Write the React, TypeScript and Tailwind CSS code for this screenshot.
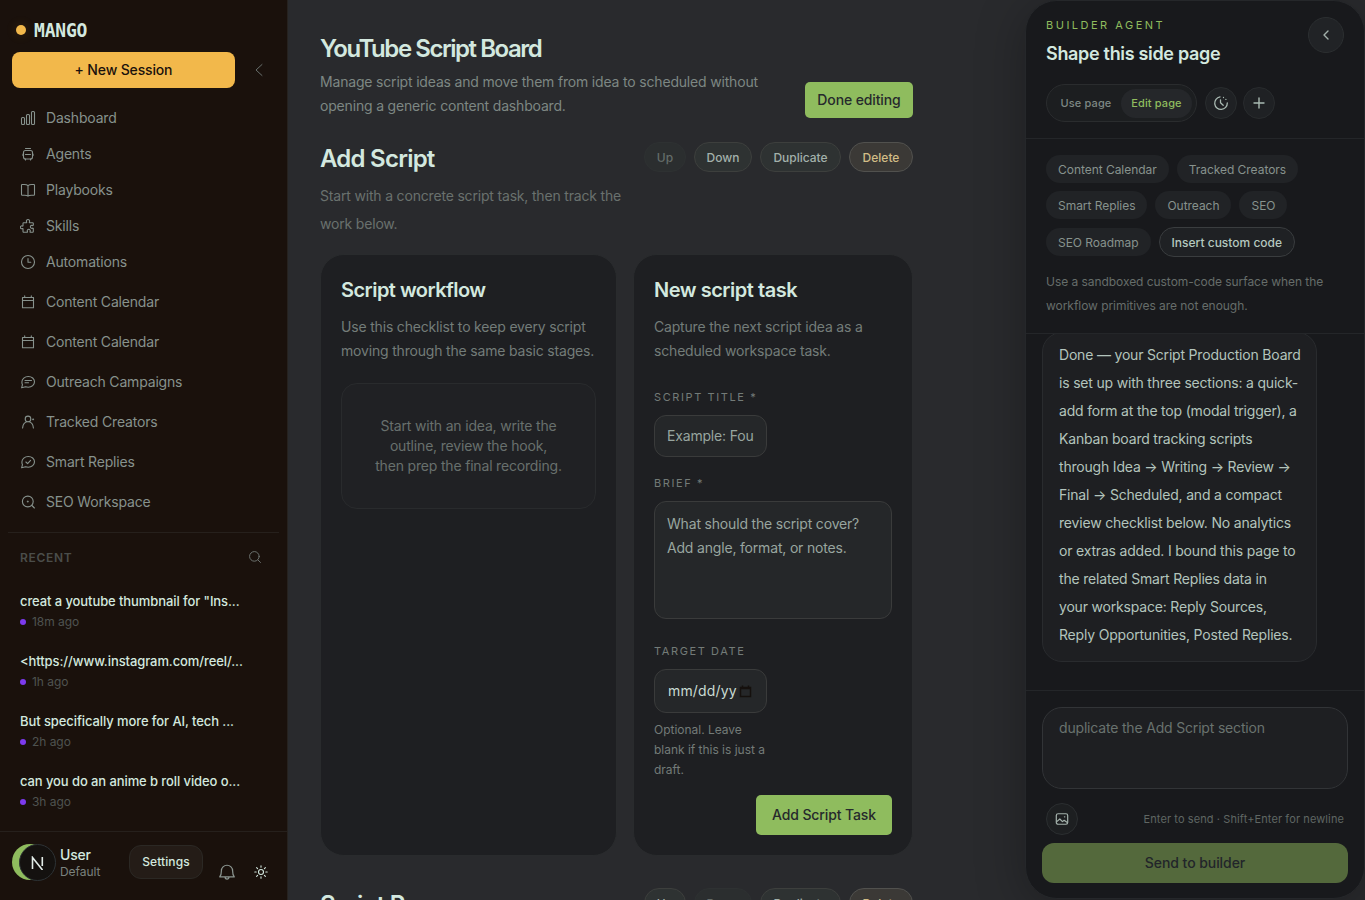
import type { ReactNode } from "react";

function Icon({
  children,
  size = 16,
  stroke = 1.1,
  className = "",
}: {
  children: ReactNode;
  size?: number;
  stroke?: number;
  className?: string;
}) {
  return (
    <svg
      width={size}
      height={size}
      viewBox="0 0 16 16"
      fill="none"
      stroke="currentColor"
      strokeWidth={stroke}
      strokeLinecap="round"
      strokeLinejoin="round"
      className={`shrink-0 ${className}`}
    >
      {children}
    </svg>
  );
}

const icons: Record<string, ReactNode> = {
  dashboard: (
    <>
      <rect x="1.5" y="7.5" width="3" height="7" rx="1" />
      <rect x="6.5" y="4.5" width="3" height="10" rx="1" />
      <rect x="11.5" y="1.5" width="3" height="13" rx="1" />
    </>
  ),
  agents: (
    <>
      <path d="M5.500 2.500h5M5.500 13v1M10.500 13v1" />
      <rect x="3.500" y="4.500" width="9" height="8.500" rx="2" />
      <path d="M3 8v1.500M13 8v1.500M5.500 8.500h5" />
    </>
  ),
  playbooks: (
    <path d="M8 3.600C7 2.700 5.800 2.500 4.300 2.500H2.200a.7.7 0 0 0-.7.700v9.300c0 .4.300.7.700.7h2.400c1.600 0 2.600.2 3.400.9.8-.7 1.800-.9 3.400-.9h2.400c.4 0 .7-.3.7-.7V3.200a.7.7 0 0 0-.7-.7h-2.100C10.200 2.500 9 2.700 8 3.600v10.400" />
  ),
  skills: (
    <path d="M3.700 4.700h2.500c.5 0 .6-.4.4-.8a1.600 1.600 0 1 1 2.800 0c-.2.4-.1.8.4.8h2.800c.4 0 .7.300.7.700v1.700c0 .5-.4.6-.8.4a1.500 1.500 0 1 0 0 2.700c.4-.2.8 0 .8.400v2.900c0 .4-.3.7-.7.700h-2.100c-.5 0-.6-.4-.4-.8a1.500 1.500 0 1 0-2.700 0c.2.400.1.800-.4.800H3.700a.7.7 0 0 1-.7-.7v-2.600c0-.4-.3-.5-.7-.3a1.400 1.400 0 1 1 0-2.600c.4.200.7.100.7-.3V5.400c0-.4.300-.7.700-.7Z" />
  ),
  automations: (
    <>
      <circle cx="8" cy="8" r="6.500" />
      <path d="M8 4.500V8.300h2.800" />
    </>
  ),
  calendar: (
    <path d="M2.500 3.500h11v10.300h-11zM2.500 6.500h11M4.700 1.900v1.600M11.300 1.900v1.600" />
  ),
  outreach: (
    <path d="M8.300 2.500c3.500 0 6.200 2.300 6.200 5.300s-2.700 5.400-6.200 5.400c-.9 0-1.800-.1-2.600-.4L1.600 13.800l.9-3.100C2 9.900 1.900 9 1.900 8c0-3.100 2.900-5.500 6.400-5.500ZM5 6.500h6.500M5 8.800h3.500" />
  ),
  creators: (
    <path d="M8 7.700a2.800 2.800 0 1 0 0-5.600 2.800 2.800 0 0 0 0 5.600ZM2.600 14c.3-3.800 2.300-6.300 5.400-6.300s5.100 2.500 5.400 6.300M12.600 5.300h1M13.100 4.800v1" />
  ),
  replies: (
    <path d="M8.300 2.500c3.500 0 6.200 2.300 6.200 5.300s-2.700 5.400-6.200 5.400c-.9 0-1.800-.1-2.600-.4L1.600 13.800l.9-3.100C2 9.900 1.900 9 1.900 8c0-3.100 2.900-5.500 6.400-5.500ZM5.900 8l1.700 1.600 3-3.200" />
  ),
  seo: (
    <>
      <circle cx="7.800" cy="7.500" r="5.400" />
      <path d="m11.900 11.500 2.500 2.500M7.800 7v1M7.300 7.500h1" />
    </>
  ),
  search: (
    <>
      <circle cx="7.300" cy="7.300" r="5.500" />
      <path d="m11.300 11.300 3 3" />
    </>
  ),
};

const primaryNav = [
  { icon: "dashboard", label: "Dashboard" },
  { icon: "agents", label: "Agents" },
  { icon: "playbooks", label: "Playbooks" },
  { icon: "skills", label: "Skills" },
  { icon: "automations", label: "Automations" },
];

const pageNav = [
  { icon: "calendar", label: "Content Calendar" },
  { icon: "calendar", label: "Content Calendar" },
  { icon: "outreach", label: "Outreach Campaigns" },
  { icon: "creators", label: "Tracked Creators" },
  { icon: "replies", label: "Smart Replies" },
  { icon: "seo", label: "SEO Workspace" },
];

const recent = [
  { title: 'creat a youtube thumbnail for "Ins...', time: "18m ago" },
  { title: "<https://www.instagram.com/reel/...", time: "1h ago" },
  { title: "But specifically more for AI, tech ...", time: "2h ago" },
  { title: "can you do an anime b roll video o...", time: "3h ago" },
];

const replyLines = [
  "Done — your Script Production Board",
  "is set up with three sections: a quick-",
  "add form at the top (modal trigger), a",
  "Kanban board tracking scripts",
  "through Idea → Writing → Review →",
  "Final → Scheduled, and a compact",
  "review checklist below. No analytics",
  "or extras added. I bound this page to",
  "the related Smart Replies data in",
  "your workspace: Reply Sources,",
  "Reply Opportunities, Posted Replies.",
];

function Sidebar() {
  return (
    <aside className="flex h-full w-72 shrink-0 flex-col border-r border-[#26221f] bg-[#1a110c]">
      <div className="flex h-[52px] items-center gap-2 pt-2 pl-4">
        <span className="size-2.5 rounded-full bg-[#f2b84b] shadow-[0_0_12px_rgba(242,184,75,0.15)]" />
        <span className="origin-center translate-y-px scale-y-105 font-['DejaVu_Sans_Mono',monospace] text-[18px] leading-none font-bold tracking-[-0.2px] text-[#d3e8df]">
          MANGO
        </span>
      </div>
      <div className="flex h-9 shrink-0 items-center pl-3">
        <button className="h-9 w-[223px] rounded-lg bg-[#f2b84b] text-sm font-medium tracking-[-0.15px] text-[#1a110c]">
          + New Session
        </button>
        <Icon className="ml-4 text-[#68706d]" stroke={1}>
          <path d="M11 2.500 5 8l6 5.500" />
        </Icon>
      </div>
      <nav className="mt-3 shrink-0 text-sm text-[#87928d]">
        {primaryNav.map((item) => (
          <div key={item.label} className="flex h-9 items-center gap-2.5 pl-5">
            <Icon>{icons[item.icon]}</Icon>
            {item.label}
          </div>
        ))}
        <div className="mt-0.5">
          {pageNav.map((item, i) => (
            <div key={i} className="flex h-10 items-center gap-2.5 pl-5">
              <Icon>{icons[item.icon]}</Icon>
              {item.label}
            </div>
          ))}
        </div>
      </nav>
      <div className="mx-2 mt-2.5 h-px shrink-0 bg-[#26201c]" />
      <div className="mt-3 flex h-6 shrink-0 items-center justify-between pr-[25px] pl-5">
        <span className="pt-0.5 text-xs font-semibold tracking-[0.7px] text-[#4b4d4a]">RECENT</span>
        <Icon size={14} className="text-[#6d7470]">
          {icons.search}
        </Icon>
      </div>
      <div className="mt-[22px] grow">
        {recent.map((item) => (
          <div key={item.time} className="h-[60px] pl-5">
            <p className="text-[13px] leading-[21px] font-medium tracking-[-0.09px] whitespace-pre text-[#d3e8df]">
              {item.title}
            </p>
            <p className="flex items-center gap-1.5 text-xs leading-5 tracking-[-0.05px] text-[#4f5350]">
              <span className="size-1.5 rounded-full bg-[#7c3aed]" />
              {item.time}
            </p>
          </div>
        ))}
      </div>
      <div className="flex h-[69px] shrink-0 border-t border-[#26201c] pt-3 pl-3">
        <div className="flex">
          <span className="size-9 rounded-full bg-[#8fbc5e]" />
          <span className="-ml-[29px] flex size-[37px] items-center justify-center rounded-full border border-[#2d3235] bg-[#14110f]">
            <svg width="13" height="14" viewBox="0 0 13 14" fill="none" stroke="#e2ece8" strokeWidth="1.600">
              <path d="M1.500 13V1.500L11.500 14M11.300 1v9" />
            </svg>
          </span>
        </div>
        <div className="ml-1 w-[69px] pt-0.5">
          <p className="text-sm leading-[18px] font-medium text-[#d3e8df]">User</p>
          <p className="text-xs leading-4 tracking-[-0.05px] text-[#7a827e]">Default</p>
        </div>
        <button className="mt-[1px] h-[34px] w-[74px] rounded-xl border border-[#2b2824] bg-[#241c17] text-xs font-medium tracking-[0.1px] text-[#d3e8df]">
          Settings
        </button>
        <Icon size={18} className="mt-[19px] ml-[15px] text-[#8b9590]">
          <path d="M1.500 12.300c1-1 1.500-2 1.500-5.300a5 5 0 0 1 10 0c0 3.300.5 4.300 1.500 5.300zM6.300 12.500a1.750 1.750 0 0 0 3.500 0" />
        </Icon>
        <Icon className="mt-5 ml-[17px] text-[#d3e8df]">
          <circle cx="8" cy="8" r="2.500" />
          <path d="M8 1.800v1.400M8 12.800v1.400M1.800 8h1.400M12.800 8h1.400M3.600 3.600l1 1M11.400 11.400l1 1M3.600 12.400l1-1M11.400 4.600l1-1" />
        </Icon>
      </div>
    </aside>
  );
}

function SectionActions({ first }: { first?: boolean }) {
  const active = "border-[#3d3f3d] bg-[#2e3232] text-[#a3b1ab]";
  const disabled = "border-[#2e3132] bg-[#2b2e2f] text-[#646c69]";
  return (
    <div className="flex h-[30px] w-[269px] shrink-0 gap-2 text-xs font-medium tracking-[0px]">
      <button className={`w-[42px] rounded-full border pt-px ${first ? disabled : active}`}>Up</button>
      <button className={`w-[58px] rounded-full border pt-px ${first ? active : disabled}`}>Down</button>
      <button className={`w-[81px] rounded-full border pt-px ${active}`}>Duplicate</button>
      <button className="w-16 rounded-full border border-[#51514e] bg-[#3b3936] pt-px text-[#d2bd86]">Delete</button>
    </div>
  );
}

function Label({ children }: { children: ReactNode }) {
  return <p className="text-[11px] leading-4 tracking-[1.6px] text-[#737b78]">{children}</p>;
}

function ScriptForm() {
  return (
    <section className="h-[602px] rounded-3xl border border-[#292b2d] bg-[#1e1f22] px-5 pt-5">
      <h3 className="text-xl leading-[30px] font-semibold tracking-[-0.47px] text-[#d3e8df]">New script task</h3>
      <p className="mt-[10px] text-sm leading-6 text-[#737c79]">
        Capture the next script idea as a<br />
        scheduled workspace task.
      </p>
      <div className="mt-[26px]">
        <Label>SCRIPT TITLE *</Label>
        <div className="mt-2.5 flex h-[42px] w-[113px] items-center rounded-xl border border-[#3a3b3b] bg-[#252729] px-3 text-sm text-[#98a59f]">
          <span className="whitespace-nowrap">Example: Fou</span>
        </div>
      </div>
      <div className="mt-[18px]">
        <Label>BRIEF *</Label>
        <div className="mt-2.5 h-[118px] w-[238px] rounded-xl border border-[#3a3b3b] bg-[#252729] px-3 pt-2.5 text-sm leading-6 text-[#98a59f]">
          What should the script cover?
          <br />
          Add angle, format, or notes.
        </div>
      </div>
      <div className="mt-6">
        <Label>TARGET DATE</Label>
        <div className="mt-2.5 flex h-11 w-[113px] items-center rounded-xl border border-[#3a3b3b] bg-[#252729] pl-[13px] text-sm text-[#c8dbd3]">
          <span className="w-[71px] tracking-[0.15px]">mm/dd/yy</span>
          <svg width="13" height="13" viewBox="0 0 13 13" fill="none" stroke="#15100d" strokeWidth="1.500">
            <path d="M1.500 2.500h10v9h-10zM1.500 3.500h10M3.500.5v2M9.500.5v2" />
          </svg>
        </div>
        <p className="mt-[7px] text-xs leading-5 tracking-[-0.02px] text-[#737b78]">
          Optional. Leave
          <br />
          blank if this is just a<br />
          draft.
        </p>
      </div>
      <div className="mt-[15px] flex justify-end">
        <button className="h-10 w-[136px] rounded-[5px] bg-[#8fbc5e] text-sm font-medium tracking-[-0.12px] text-[#26292c]">
          Add Script Task
        </button>
      </div>
    </section>
  );
}

function Board() {
  return (
    <main className="h-full grow overflow-hidden bg-[#292a2d] pl-8">
      <div className="w-[593px]">
        <header className="flex h-[118px] items-end justify-between pt-8">
          <div className="h-[85px]">
            <h1 className="text-2xl leading-8 font-semibold tracking-[-1.45px] text-[#d3e8df]">
              YouTube Script Board
            </h1>
            <p className="mt-[5px] text-sm leading-6 text-[#7d8783]">
              Manage script ideas and move them from idea to scheduled without
              <br />
              opening a generic content dashboard.
            </p>
          </div>
          <button className="h-9 w-[108px] rounded-[5px] bg-[#8fbc5e] text-sm font-medium tracking-[-0.12px] text-[#26292c]">
            Done editing
          </button>
        </header>
        <div className="mt-6 flex h-[112px] justify-between">
          <div>
            <h2 className="text-2xl leading-[34px] font-semibold tracking-[-0.76px] text-[#d3e8df]">Add Script</h2>
            <p className="mt-1.5 text-sm leading-7 text-[#69716e]">
              Start with a concrete script task, then track the
              <br />
              work below.
            </p>
          </div>
          <SectionActions first />
        </div>
        <div className="grid grid-cols-[297px_280px] gap-4">
          <section className="h-[602px] rounded-3xl border border-[#292b2d] bg-[#1e1f22] p-5">
            <h3 className="text-xl leading-[30px] font-semibold tracking-[-0.53px] text-[#d3e8df]">Script workflow</h3>
            <p className="mt-[10px] text-sm leading-6 whitespace-nowrap text-[#737c79]">
              Use this checklist to keep every script
              <br />
              moving through the same basic stages.
            </p>
            <div className="mt-5 flex h-[126px] items-center justify-center rounded-2xl border border-[#292b2d] bg-[#202124] text-center text-sm leading-5 text-[#68706d]">
              <p>
                Start with an idea, write the
                <br />
                outline, review the hook,
                <br />
                then prep the final recording.
              </p>
            </div>
          </section>
          <ScriptForm />
        </div>
        <div className="mt-8 flex justify-between">
          <h2 className="text-2xl leading-[34px] font-semibold tracking-[-0.76px] text-[#d3e8df]">Script Progress</h2>
          <SectionActions />
        </div>
      </div>
    </main>
  );
}

function Chip({ children }: { children: ReactNode }) {
  return (
    <span className="flex h-7 items-center rounded-full bg-[#212326] px-3 pt-px text-xs tracking-[-0.04px] text-[#87928d]">
      {children}
    </span>
  );
}

function BuilderPanel() {
  return (
    <aside className="absolute top-0 right-0 flex h-[899px] w-[340px] flex-col overflow-hidden rounded-[32px] border border-[#25272a] bg-[#18191c] shadow-[0_8px_50px_rgba(0,0,0,0.28)]">
      <div className="flex h-[138px] shrink-0 justify-between border-b border-[#242629] px-5">
        <div className="pt-4">
          <p className="text-[11px] leading-4 tracking-[2.500px] text-[#8fbc5e]">BUILDER AGENT</p>
          <h2 className="mt-[5px] text-lg leading-8 font-semibold tracking-[-0.32px] text-[#d3e8df]">
            Shape this side page
          </h2>
          <div className="mt-3.5 flex items-center gap-2">
            <div className="flex h-[38px] w-[151px] items-center rounded-full border border-[#2a2c2e] bg-[#1c1e20] pl-1 text-[11px] font-medium tracking-[0.12px]">
              <span className="w-[70px] text-center text-[#7e8884]">Use page</span>
              <span className="flex h-[29px] w-[71px] items-center justify-center rounded-full bg-[#25272a] text-[#8fbc5e]">
                Edit page
              </span>
            </div>
            <button className="flex size-8 items-center justify-center rounded-full border border-[#292c2e] bg-[#1f2124] text-[#a9bab2]">
              <Icon stroke={1.3}>
                <path d="M7 1.900A6.300 6.300 0 1 0 14.300 8M7.500 4.800v3l2.700 2.400M10.500 2.400v.1M12.900 4.300v.1" />
              </Icon>
            </button>
            <button className="-ml-0.5 flex size-8 items-center justify-center rounded-full border border-[#292c2e] bg-[#1f2124] text-[#a9bab2]">
              <Icon stroke={1.4}>
                <path d="M8 3v10M3 8h10" />
              </Icon>
            </button>
          </div>
        </div>
        <button className="mt-4 flex size-9 items-center justify-center rounded-full border border-[#2c2f31] bg-[#212326] text-[#a3b1ab]">
          <Icon stroke={1.4}>
            <path d="M10 4 6 8l4 4" />
          </Icon>
        </button>
      </div>
      <div className="flex h-[195px] shrink-0 flex-col border-b border-[#242629] pt-4 pl-5">
        <div className="flex gap-2">
          <Chip>Content Calendar</Chip>
          <Chip>Tracked Creators</Chip>
        </div>
        <div className="mt-2 flex gap-2">
          <Chip>Smart Replies</Chip>
          <Chip>Outreach</Chip>
          <Chip>SEO</Chip>
        </div>
        <div className="mt-2 flex h-[30px] items-center gap-2">
          <Chip>SEO Roadmap</Chip>
          <span className="flex h-[30px] items-center rounded-full border border-[#3a3d3f] bg-[#1f2124] px-3 pt-px text-xs font-medium tracking-[0px] text-[#b5c8bf]">
            Insert custom code
          </span>
        </div>
        <p className="mt-[13px] text-xs leading-6 tracking-[-0.05px] text-[#666d6a]">
          Use a sandboxed custom-code surface when the
          <br />
          workflow primitives are not enough.
        </p>
      </div>
      <div className="flex h-[357px] shrink-0 flex-col justify-end overflow-hidden border-b border-[#242629] pb-7 pl-4">
        <div className="w-[275px] shrink-0 rounded-[20px] border border-[#292b2e] bg-[#1e1f22] px-4 pt-2 pb-3 text-sm leading-7 tracking-[-0.19px] whitespace-nowrap text-[#b3c4bc]">
          {replyLines.map((line) => (
            <p key={line}>{line}</p>
          ))}
        </div>
      </div>
      <div className="px-4 pt-4">
        <div className="h-[82px] rounded-[20px] border border-[#323437] bg-[#1e1f22] px-4 pt-2 text-sm leading-6 text-[#69726e]">
          duplicate the Add Script section
        </div>
        <div className="mt-3.5 flex items-center justify-between px-1">
          <button className="flex size-8 items-center justify-center rounded-full border border-[#2b2e30] bg-[#1d1f21] text-[#a3b1ab]">
            <Icon size={14} stroke={1.4}>
              <rect x="1.500" y="2" width="13" height="12" rx="2" />
              <path d="m2 11 3.500-3 3 3 2-1.500 3.500 2.500M10.800 5.500h.4" />
            </Icon>
          </button>
          <span className="text-[11px] tracking-[0.1px] text-[#5f6663]">Enter to send · Shift+Enter for newline</span>
        </div>
        <button className="mt-2 h-10 w-full rounded-xl bg-[#54693c] text-sm font-medium tracking-[-0.07px] text-[#22252a]">
          Send to builder
        </button>
      </div>
    </aside>
  );
}

export default function App() {
  return (
    <div className="relative flex h-[900px] w-[1365px] overflow-hidden bg-[#292a2d] font-['Inter',sans-serif] tracking-[-0.18px]">
      <Sidebar />
      <Board />
      <BuilderPanel />
    </div>
  );
}
